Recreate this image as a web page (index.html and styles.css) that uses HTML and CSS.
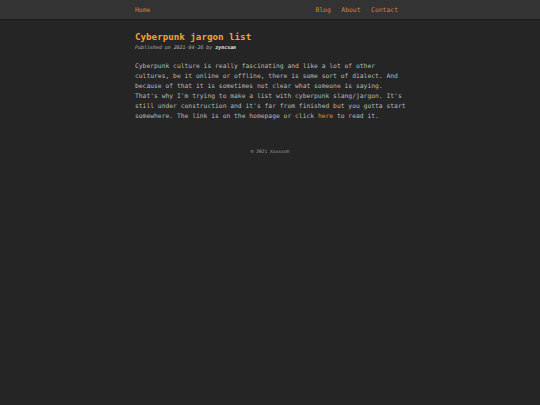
FILE: index.html
```html
<!DOCTYPE html>
<html lang="en">
<head>
<meta charset="utf-8">
<title>Cyberpunk jargon list</title>
<link rel="stylesheet" href="styles.css">
</head>
<body>
<header class="topbar">
  <nav class="nav">
    <a class="nav-link" href="#">Home</a>
    <div class="nav-right">
      <a class="nav-link" href="#">Blog</a>
      <a class="nav-link" href="#">About</a>
      <a class="nav-link" href="#">Contact</a>
    </div>
  </nav>
</header>
<main class="content">
  <article class="post">
    <h1 class="post-title">Cyberpunk jargon list</h1>
    <p class="post-meta">Published on 2021-04-26 by <b class="author">zyncsan</b></p>
    <p class="post-body">Cyberpunk culture is really fascinating and like a lot of other<br>cultures, be it online or offline, there is some sort of dialect. And<br>because of that it is sometimes not clear what someone is saying.<br>That's why I'm trying to make a list with cyberpunk slang/jargon. It's<br>still under construction and it's far from finished but you gotta start<br>somewhere. The link is on the homepage or click <a class="link" href="#">here</a> to read it.</p>
  </article>
  <footer class="footer">© 2021 Xxxxxx©</footer>
</main>
</body>
</html>
```

FILE: styles.css
```css
html, body {
  margin: 0;
  padding: 0;
}
body {
  background: #242524;
  color: #c9c9c9;
  font-family: "DejaVu Sans Mono", "Liberation Mono", monospace;
  min-height: 405px;
}
.topbar {
  background: #333333;
  height: 19px;
  border-bottom: 1px solid #1c1c1c;
}
.nav {
  width: 270px;
  margin: 0 auto;
  height: 19px;
  display: flex;
  align-items: center;
  justify-content: space-between;
}
.nav-right {
  display: flex;
  gap: 10.5px;
  margin-right: 7px;
}
.nav-link {
  color: #c7873e;
  text-decoration: none;
  font-size: 6.4px;
  line-height: 1;
  padding-top: 1px;
}
.content {
  width: 270px;
  margin: 0 auto;
}
.post {
  padding-top: 11px;
}
.post-title {
  margin: 0;
  color: #f4a232;
  font-size: 9.2px;
  line-height: 12px;
  font-weight: bold;
}
.post-meta {
  margin: 0;
  font-size: 4.95px;
  line-height: 8px;
  font-style: italic;
  color: #b0b0b0;
}
.author {
  color: #e8e8e8;
}
.post-body {
  margin: 10px 0 0 0;
  font-size: 6.33px;
  line-height: 10px;
  color: #b9b9b9;
  white-space: nowrap;
}
.link {
  color: #e5912f;
  text-decoration: none;
}
.footer {
  margin-top: 28px;
  text-align: center;
  font-size: 4.6px;
  color: #a0a0a0;
}
```
